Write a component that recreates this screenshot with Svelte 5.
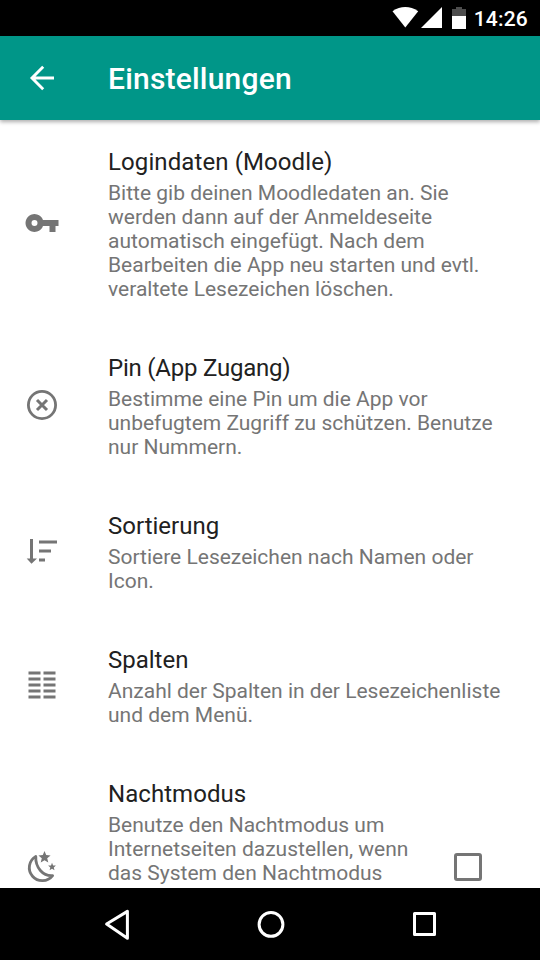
<script>
  const items = [
    {
      icon: 'key',
      title: 'Logindaten (Moodle)',
      spacing: 0.1,
      lines: ['Bitte gib deinen Moodledaten an. Sie', 'werden dann auf der Anmeldeseite', 'automatisch eingefügt. Nach dem', 'Bearbeiten die App neu starten und evtl.', 'veraltete Lesezeichen löschen.']
    },
    {
      icon: 'pin',
      title: 'Pin (App Zugang)',
      spacing: -0.22,
      lines: ['Bestimme eine Pin um die App vor', 'unbefugtem Zugriff zu schützen. Benutze', 'nur Nummern.']
    },
    { icon: 'sort', title: 'Sortierung', spacing: 0, lines: ['Sortiere Lesezeichen nach Namen oder', 'Icon.'] },
    { icon: 'columns', title: 'Spalten', spacing: 0, lines: ['Anzahl der Spalten in der Lesezeichenliste', 'und dem Menü.'] },
    {
      icon: 'night',
      title: 'Nachtmodus',
      spacing: 0.06,
      lines: ['Benutze den Nachtmodus um', 'Internetseiten dazustellen, wenn', 'das System den Nachtmodus'],
      checkbox: true
    }
  ];
</script>

<div class="screen">
  <div class="status">
    <svg width="86" height="36" viewBox="0 0 86 36">
      <path d="M12.5 11.2Q18.7 7.1 25.3 7.1T38.2 11.2L25.3 27.5Z" fill="#fff" />
      <path d="M62 7V28H41Z" fill="#fff" />
      <path d="M72 9h4V7h6v2h4v7H72Z" fill="#4d4d4d" />
      <path d="M72 16h14v13H72Z" fill="#fff" />
    </svg>
    <span>14:26</span>
  </div>
  <header>
    <svg width="84" height="84" viewBox="0 0 84 84" fill="none" stroke="#fff" stroke-width="2.9">
      <path d="M54 42H32M43.2 30.8L32 42l11.2 11.2" />
    </svg>
    <h1>Einstellungen</h1>
  </header>
  <main>
    {#each items as item}
      <section class:tall={item.checkbox}>
        <svg class="icon" width="36" height="36" viewBox="0 0 36 36">
          {#if item.icon === 'key'}
            <path fill-rule="evenodd" d="M18.98 15A9 9 0 1 0 18.98 21H25.5v6h6v-6h3v-6ZM10.5 21a3 3 0 1 1 0-6 3 3 0 0 1 0 6Z" />
          {:else if item.icon === 'pin'}
            <circle cx="18" cy="18" r="13.6" fill="none" stroke="#757575" stroke-width="2.8" />
            <path d="M13 13l10 10M23 13l-10 10" stroke="#757575" stroke-width="3" />
          {:else if item.icon === 'sort'}
            <path d="M6 6h3v19.5h4L7.5 30.7 2.7 25.5H6ZM15 7.4h18v3H15ZM15 16.4h12v3H15ZM15 25.4h6v3h-6Z" />
          {:else if item.icon === 'columns'}
            <path d="M4.5 4.5h12v3h-12ZM19.5 4.5h12v3h-12ZM4.5 10.5h12v3h-12ZM19.5 10.5h12v3h-12ZM4.5 16.5h12v3h-12ZM19.5 16.5h12v3h-12ZM4.5 22.5h12v3h-12ZM19.5 22.5h12v3h-12ZM4.5 28.5h12v3h-12ZM19.5 28.5h12v3h-12Z" />
          {:else}
            <path d="M11.8 7.4A13 13 0 1 0 28.6 26.6C19 27.4 11.2 18.5 11.8 7.4Z" fill="none" stroke="#757575" stroke-width="2.8" stroke-linejoin="round" />
            <path d="M20.5 2l1.7 4.1 4.4.3-3.4 2.9 1.1 4.3-3.8-2.3-3.8 2.3 1.1-4.3-3.4-2.9 4.4-.3ZM28 13.7l1.1 2.7 2.8.2-2.1 1.8.7 2.8-2.5-1.5-2.4 1.5.7-2.8-2.2-1.8 2.9-.2Z" />
          {/if}
        </svg>
        <div class="copy">
          <h2 style="letter-spacing: {item.spacing}px">{item.title}</h2>
          <p>
            {#each item.lines as line}<span>{line}</span>{/each}
          </p>
        </div>
        {#if item.checkbox}
          <div class="check" role="checkbox" aria-checked="false" aria-label={item.title} tabindex="0"></div>
        {/if}
      </section>
    {/each}
  </main>
  <nav>
    <svg width="540" height="72" viewBox="0 0 540 72" fill="none" stroke="#fff" stroke-width="3" stroke-linejoin="round">
      <path d="M127.4 23.4v26.8L106.6 36Z" />
      <circle cx="271" cy="36.4" r="11.9" />
      <rect x="414.5" y="25.5" width="20" height="21" />
    </svg>
  </nav>
</div>

<style>
  .screen {
    width: 540px;
    height: 960px;
    display: flex;
    flex-direction: column;
    overflow: hidden;
    background: #fff;
    font-family: Roboto, sans-serif;
  }
  .status {
    height: 36px;
    flex: none;
    background: #000;
    color: #fff;
    display: flex;
    align-items: center;
    justify-content: flex-end;
    gap: 8px;
    padding-right: 12px;
    font-size: 21px;
    font-weight: 500;
  }
  .status span {
    line-height: 36px;
    padding-top: 2px;
    letter-spacing: 0.2px;
  }
  header {
    height: 84px;
    flex: none;
    display: flex;
    align-items: center;
    background: #009688;
    box-shadow: 0 2px 4px rgba(0, 0, 0, 0.32);
    z-index: 1;
  }
  h1 {
    margin: 0;
    padding: 2px 0 0 24px;
    color: #fff;
    font-size: 30px;
    line-height: 36px;
    font-weight: 500;
    letter-spacing: 0.2px;
  }
  main {
    flex: 1;
    min-height: 0;
    overflow: hidden;
  }
  section {
    display: flex;
    align-items: center;
    padding-left: 24px;
  }
  .icon {
    flex: none;
    fill: #757575;
  }
  .copy {
    padding: 25px 0 25px 48px;
    width: 346px;
    flex: none;
    white-space: nowrap;
  }
  .tall {
    height: 230px;
  }
  .tall .copy {
    align-self: flex-start;
  }
  h2 {
    margin: 0 0 2px;
    color: #212121;
    font-size: 24px;
    line-height: 34px;
    font-weight: 400;
  }
  p {
    margin: 0;
    color: #757575;
    font-size: 21px;
    line-height: 24px;
  }
  p span {
    display: block;
  }
  .check {
    box-sizing: border-box;
    width: 28px;
    height: 28px;
    border: 3px solid #757575;
    border-radius: 3px;
  }
  nav {
    height: 72px;
    flex: none;
    background: #000;
  }
  nav svg {
    display: block;
  }
</style>
